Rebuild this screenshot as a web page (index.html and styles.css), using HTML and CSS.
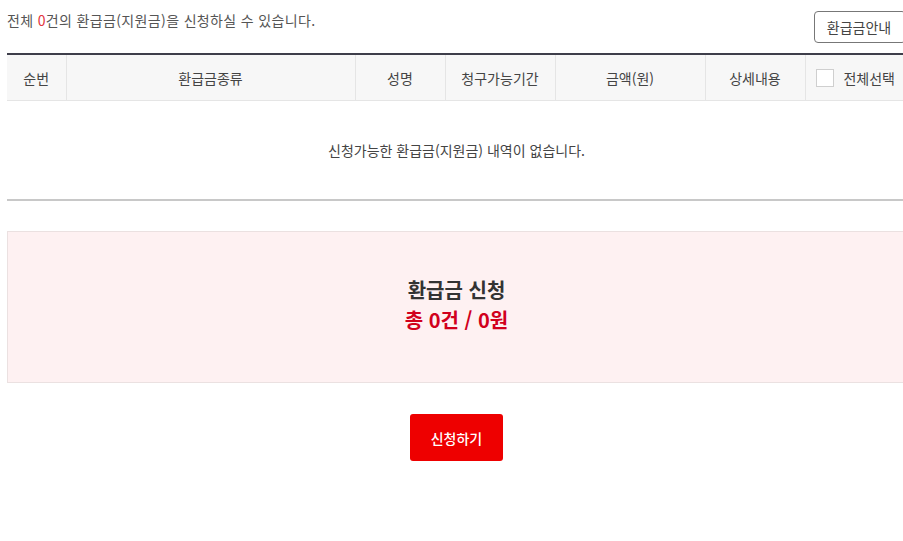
FILE: index.html
```html
<!DOCTYPE html>
<html lang="ko">
<head>
<meta charset="utf-8">
<title>환급금 신청</title>
<link rel="stylesheet" href="styles.css">
</head>
<body>
<div class="wrap">
  <div class="top">
    <p class="count">전체 <em>0</em>건의 환급금(지원금)을 신청하실 수 있습니다.</p>
    <button class="guide" type="button">환급금안내</button>
  </div>
  <table class="list">
    <colgroup>
      <col class="c1"><col class="c2"><col class="c3"><col class="c4"><col class="c5"><col class="c6"><col class="c7">
    </colgroup>
    <thead>
      <tr>
        <th>순번</th>
        <th>환급금종류</th>
        <th>성명</th>
        <th>청구가능기간</th>
        <th>금액(원)</th>
        <th>상세내용</th>
        <th><label class="all"><span class="chk"></span>전체선택</label></th>
      </tr>
    </thead>
    <tbody>
      <tr><td colspan="7" class="empty">신청가능한 환급금(지원금) 내역이 없습니다.</td></tr>
    </tbody>
  </table>
  <div class="summary">
    <strong class="title">환급금 신청</strong>
    <strong class="total">총 0건 / 0원</strong>
  </div>
  <div class="actions">
    <button class="apply" type="button">신청하기</button>
  </div>
</div>
</body>
</html>
```
FILE: styles.css
```css
html, body { margin: 0; padding: 0; overflow: hidden; background: #fff; }
body {
  font-family: "Noto Sans CJK KR", "Noto Sans", sans-serif;
  color: #333;
  padding: 0 0 0 7px;
}
.wrap { width: 899px; }
.top {
  display: flex;
  justify-content: space-between;
  align-items: flex-start;
  height: 53px;
}
.count {
  margin: 10px 0 0;
  font-size: 14px;
  letter-spacing: 0.35px;
  color: #555;
  line-height: 20px;
}
.count em { font-style: normal; color: #e2323c; }
.guide {
  margin-top: 11px;
  width: 92px;
  height: 32px;
  border: 1px solid #777;
  border-radius: 4px;
  background: #fff;
  font-family: inherit;
  font-size: 14px;
  letter-spacing: 0;
  color: #444;
  padding: 0 2px 0 0;
}
.list {
  width: 100%;
  border-collapse: collapse;
  table-layout: fixed;
  border-top: 2px solid #3e3e4a;
}
.c1 { width: 59px; } .c2 { width: 289px; } .c3 { width: 90px; } .c4 { width: 110px; }
.c5 { width: 150px; } .c6 { width: 100px; } .c7 { width: 101px; }
.list th {
  height: 45px;
  padding: 0;
  background: #f7f7f7;
  border-bottom: 1px solid #e5e5e5;
  border-left: 1px solid #e5e5e5;
  font-weight: normal;
  font-size: 14px;
  letter-spacing: 0;
  color: #444;
}
.list th:first-child { border-left: 0; }
.all { display: flex; align-items: center; justify-content: center; gap: 9px; }
.chk {
  width: 18px; height: 18px;
  border: 1px solid #cfcfcf;
  background: #fff;
  box-sizing: border-box;
}
.empty {
  height: 98px;
  padding: 0;
  text-align: center;
  font-size: 14px;
  letter-spacing: 0;
  color: #444;
  border-bottom: 2px solid #c8c8c8;
}
.summary {
  margin-top: 30px;
  height: 152px;
  box-sizing: border-box;
  border: 1px solid #ebe1e1;
  background: #fef1f2;
  display: flex;
  flex-direction: column;
  align-items: center;
  justify-content: center;
  gap: 2px;
  padding-bottom: 4px;
}
.title { font-size: 20px; color: #333; letter-spacing: 0; line-height: 28px; }
.total { font-size: 20px; color: #d1001c; letter-spacing: 0; line-height: 28px; }
.actions { display: flex; justify-content: center; padding-top: 31px; }
.apply {
  width: 93px;
  height: 47px;
  border: 0;
  border-radius: 3px;
  background: #ee0000;
  color: #fff;
  font-family: inherit;
  font-size: 14px;
  font-weight: 500;
  letter-spacing: 0;
  padding: 0;
}
```
